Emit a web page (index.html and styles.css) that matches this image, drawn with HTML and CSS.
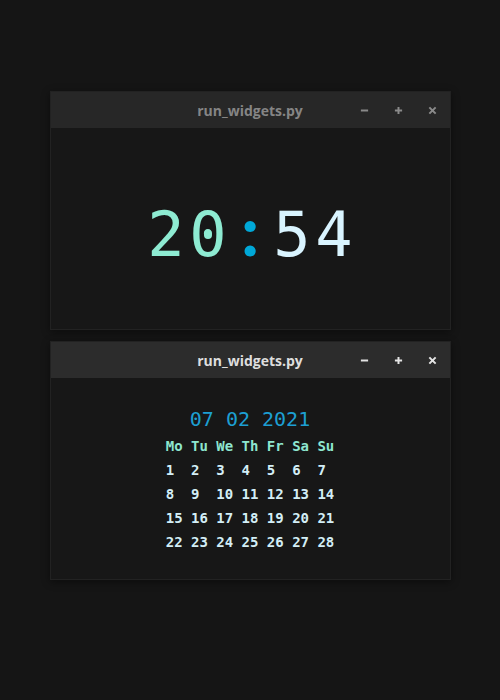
FILE: index.html
```html
<!DOCTYPE html>
<html>
<head>
<meta charset="utf-8">
<link rel="stylesheet" href="styles.css">
</head>
<body>
<div class="desktop">
  <div class="window inactive">
    <div class="titlebar">
      <span class="title">run_widgets.py</span>
      <div class="controls">
        <svg class="btn" viewBox="0 0 10 10"><path d="M1 5H9"/></svg>
        <svg class="btn" viewBox="0 0 10 10"><path d="M1 5H9M5 1V9"/></svg>
        <svg class="btn" viewBox="0 0 10 10"><path d="M1.5 1.5L8.5 8.5M8.5 1.5L1.5 8.5"/></svg>
      </div>
    </div>
    <div class="content">
      <div class="clock">
        <span class="ch hh">2</span><span class="ch hh zero">0</span><span class="ch sep">:</span><span class="ch mm">5</span><span class="ch mm">4</span>
      </div>
    </div>
  </div>
  <div class="window">
    <div class="titlebar">
      <span class="title">run_widgets.py</span>
      <div class="controls">
        <svg class="btn" viewBox="0 0 10 10"><path d="M1 5H9"/></svg>
        <svg class="btn" viewBox="0 0 10 10"><path d="M1 5H9M5 1V9"/></svg>
        <svg class="btn" viewBox="0 0 10 10"><path d="M1.5 1.5L8.5 8.5M8.5 1.5L1.5 8.5"/></svg>
      </div>
    </div>
    <div class="content">
      <div class="calendar">
        <div class="date">07 02 2021</div>
        <div class="grid">
          <span class="dh">Mo</span><span class="dh">Tu</span><span class="dh">We</span><span class="dh">Th</span><span class="dh">Fr</span><span class="dh">Sa</span><span class="dh">Su</span>
          <span>1</span><span>2</span><span>3</span><span>4</span><span>5</span><span>6</span><span>7</span>
          <span>8</span><span>9</span><span>10</span><span>11</span><span>12</span><span>13</span><span>14</span>
          <span>15</span><span>16</span><span>17</span><span>18</span><span>19</span><span>20</span><span>21</span>
          <span>22</span><span>23</span><span>24</span><span>25</span><span>26</span><span>27</span><span>28</span>
        </div>
      </div>
    </div>
  </div>
</div>
</body>
</html>
```
FILE: styles.css
```css
html, body {
  margin: 0;
  padding: 0;
  background: #151515;
}
.desktop {
  width: 500px;
  height: 700px;
  display: flex;
  flex-direction: column;
  align-items: center;
  padding-top: 91px;
  gap: 11px;
  box-sizing: border-box;
}
.window {
  width: 401px;
  height: 239px;
  box-sizing: border-box;
  border: 1px solid #222222;
  background: #171717;
  display: flex;
  flex-direction: column;
  box-shadow: 0 2px 8px rgba(0, 0, 0, 0.45);
}
.titlebar {
  height: 36px;
  flex: none;
  background: #2c2c2c;
  position: relative;
  display: flex;
  align-items: center;
  justify-content: center;
}
.inactive .titlebar {
  background: #272727;
}
.title {
  font-family: "Open Sans", "Noto Sans", sans-serif;
  font-weight: 700;
  font-size: 14px;
  color: #dedede;
}
.inactive .title {
  color: #858585;
}
.controls {
  position: absolute;
  right: 13px;
  top: 0;
  height: 100%;
  display: flex;
  align-items: center;
  gap: 25px;
}
.btn {
  width: 9px;
  height: 9px;
  fill: none;
  stroke: #e4e4e4;
  stroke-width: 2.2;
}
.inactive .btn {
  stroke: #8a8a8a;
}
.content {
  flex: 1;
  display: flex;
  align-items: center;
  justify-content: center;
}
.clock {
  display: flex;
  align-items: baseline;
  font-family: "DejaVu Sans Mono", monospace;
  font-size: 62px;
  line-height: 62px;
  margin-top: 8px;
}
.ch {
  width: 42px;
  text-align: center;
  position: relative;
}
.zero::after {
  content: "";
  position: absolute;
  left: 50%;
  top: 27px;
  width: 8px;
  height: 8px;
  margin-left: -4px;
  border-radius: 50%;
  background: currentColor;
}
.hh { color: #8eebd2; }
.sep {
  color: #00a8d8;
  font-family: "Lato", sans-serif;
  font-weight: 900;
  font-size: 68px;
}
.mm { color: #d9f4ff; }
.calendar {
  display: flex;
  flex-direction: column;
  align-items: center;
  font-family: "DejaVu Sans Mono", monospace;
}
.date {
  font-size: 20px;
  line-height: 30px;
  color: #1d9fd2;
}
.grid {
  display: grid;
  grid-template-columns: repeat(6, 3ch) 2ch;
  grid-auto-rows: 24px;
  font-size: 14px;
  font-weight: 700;
  line-height: 24px;
  color: #d3eef6;
}
.dh {
  color: #8ee6cf;
}
```
